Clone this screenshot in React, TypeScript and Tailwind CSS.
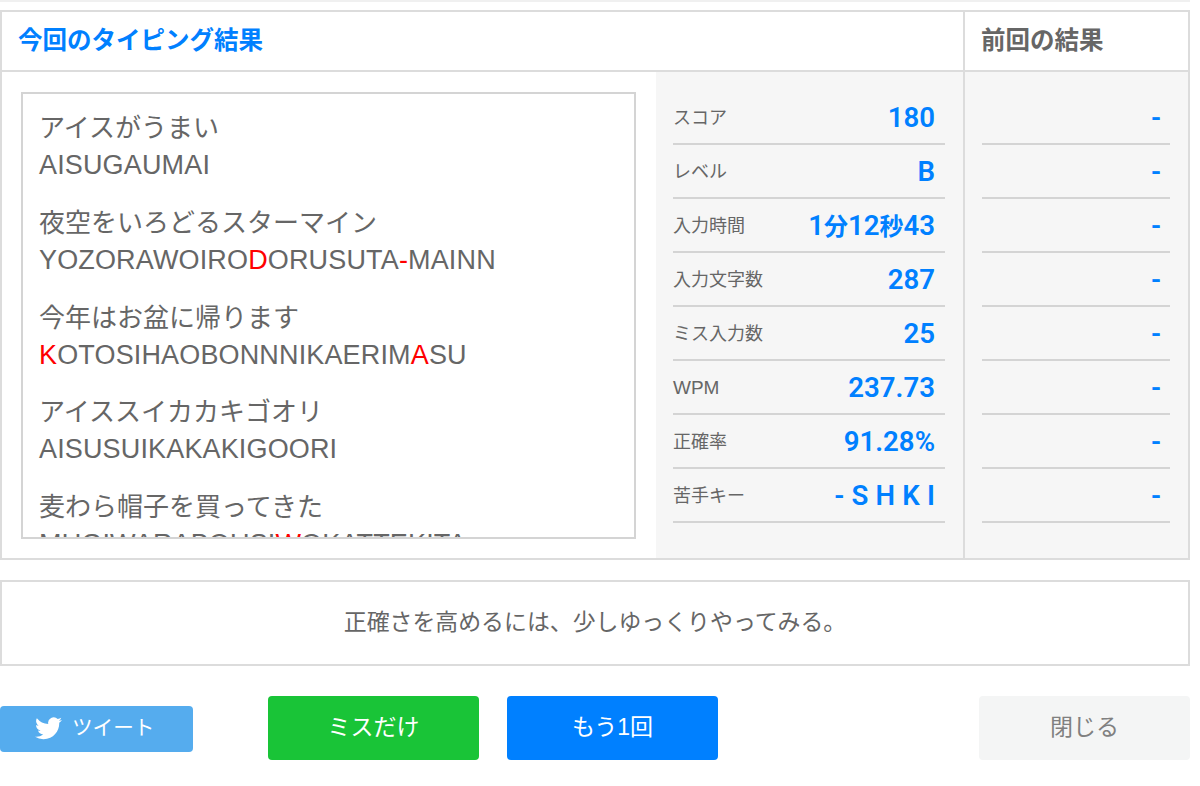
const font = "[font-family:'Liberation_Sans','Noto_Sans_CJK_JP',sans-serif]";

const Cj = ({ children }: { children: React.ReactNode }) => <span className="text-[24px]">{children}</span>;

const stats: [React.ReactNode, React.ReactNode][] = [
  ["スコア", "180"],
  ["レベル", "B"],
  ["入力時間", <>1<Cj>分</Cj>12<Cj>秒</Cj>43</>],
  ["入力文字数", "287"],
  ["ミス入力数", "25"],
  [<span className="text-[19px]">WPM</span>, "237.73"],
  ["正確率", "91.28%"],
  ["苦手キー", <span className="tracking-[0.15px]">- S H K I</span>],
];

const R = ({ children }: { children: React.ReactNode }) => <span className="text-[#ff0000]">{children}</span>;

const lines: [string, React.ReactNode][] = [
  ["アイスがうまい", "AISUGAUMAI"],
  ["夜空をいろどるスターマイン", <>YOZORAWOIRO<R>D</R>ORUSUTA<R>-</R>MAINN</>],
  ["今年はお盆に帰ります", <><R>K</R>OTOSIHAOBONNNIKAERIM<R>A</R>SU</>],
  ["アイススイカカキゴオリ", "AISUSUIKAKAKIGOORI"],
  ["麦わら帽子を買ってきた", <>MUGIWARABOUSI<R>W</R>OKATTEKITA</>],
];

export default function App() {
  return (
    <div className={`${font} w-[1200px] h-[786px] overflow-hidden bg-white text-[#666666]`}>
      <div className="h-[2px] w-[1190px] bg-[#f0f0f0]" />
      <div className="w-[1190px] mt-[8px] h-[550px] border-2 border-[#dcdcdc] flex flex-col">
        <div className="flex h-[60px] border-b-2 border-[#dcdcdc] shrink-0">
          <div className="flex-1 pl-[16px] flex items-center text-[24.5px] font-bold text-[#0080ff]">今回のタイピング結果</div>
          <div className="w-[225px] border-l-2 border-[#dcdcdc] pl-[16px] flex items-center text-[24.5px] font-bold text-[#666666]">前回の結果</div>
        </div>
        <div className="flex flex-1 min-h-0">
          <div className="w-[654px] pl-[19px] pt-[20px] shrink-0">
            <div className="w-[615px] h-[447px] border-2 border-[#d4d4d4] overflow-hidden pl-[16px] pt-[15px] text-[26px] leading-[38px]">
              {lines.map(([a, b], i) => (
                <div key={i} className="pb-[20.75px]">
                  <div>{a}</div>
                  <div className="text-[27px] leading-[36px] tracking-[0.15px]">{b}</div>
                </div>
              ))}
            </div>
          </div>
          <div className="flex-1 bg-[#f6f6f6] pl-[17px] pt-[19px] pr-[18px]">
            {stats.map(([l, v], i) => (
              <div key={i} className="h-[54px] border-b-2 border-[#d4d4d4] flex items-center justify-between pt-[2px] pr-[10px]">
                <span className="text-[18px]">{l}</span>
                <span className="text-[27.6px] font-semibold text-[#0080ff] [font-family:'Roboto','Noto_Sans_CJK_JP',sans-serif]">{v}</span>
              </div>
            ))}
          </div>
          <div className="w-[225px] border-l-2 border-[#dcdcdc] bg-[#f6f6f6] pl-[17px] pr-[18px] pt-[19px]">
            {stats.map((_, i) => (
              <div key={i} className="h-[54px] border-b-2 border-[#d4d4d4] flex items-center justify-end pt-[2px] pr-[9px] text-[27.6px] font-semibold text-[#0080ff] [font-family:'Roboto',sans-serif]">-</div>
            ))}
          </div>
        </div>
      </div>
      <div className="w-[1190px] mt-[20px] h-[86px] border-2 border-[#dcdcdc] flex items-center justify-center pb-[1px] text-[22.9px]">
        正確さを高めるには、少しゆっくりやってみる。
      </div>
      <div className="w-[1190px] mt-[30px] flex items-center">
        <button className="mt-[2px] w-[193px] h-[46px] rounded-[4px] bg-[#55acee] text-white text-[20.6px] flex items-center pl-[35px] pb-[1px] gap-[10px]">
          <svg width="27" height="23" viewBox="0 0 24 20" fill="white"><path d="M24 2.4a9.6 9.6 0 0 1-2.83.78A4.9 4.9 0 0 0 23.34.44a9.8 9.8 0 0 1-3.13 1.2A4.92 4.92 0 0 0 11.8 6.1 14 14 0 0 1 1.67.96a4.93 4.93 0 0 0 1.52 6.57A4.9 4.9 0 0 1 .96 6.9v.06a4.93 4.93 0 0 0 3.95 4.83 4.9 4.9 0 0 1-2.22.08 4.93 4.93 0 0 0 4.6 3.42A9.9 9.9 0 0 1 0 17.33 13.9 13.9 0 0 0 7.55 19.5c9.06 0 14-7.5 14-14l-.02-.64A10 10 0 0 0 24 2.4z"/></svg>
          ツイート
        </button>
        <button className="ml-[75px] w-[211px] h-[64px] pb-[2px] rounded-[4px] bg-[#19c437] text-white text-[23px]">ミスだけ</button>
        <button className="ml-[28px] w-[211px] h-[64px] pb-[2px] rounded-[4px] bg-[#0080ff] text-white text-[23px]">もう1回</button>
        <button className="ml-auto w-[211px] h-[64px] pb-[2px] rounded-[4px] bg-[#f4f5f5] text-[#808080] text-[23px]">閉じる</button>
      </div>
    </div>
  );
}
